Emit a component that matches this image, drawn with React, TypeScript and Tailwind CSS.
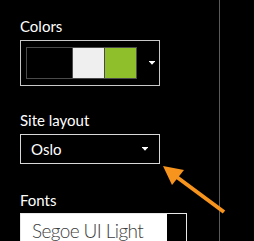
import React from "react";

function Caret() {
  return (
    <svg width="6" height="4" viewBox="0 0 6 4" className="block">
      <rect x="0" y="0" width="6" height="1" fill="#fff" />
      <polygon points="0.5,1 5.5,1 3,3.8" fill="#fff" />
    </svg>
  );
}

export default function App() {
  return (
    <div
      className="relative w-[254px] h-[241px] overflow-hidden bg-black text-white flex"
      style={{ fontFamily: 'Lato, "Noto Sans", sans-serif' }}
    >
      <div className="w-[220px] shrink-0 border-r border-[#5a5a5a] pl-[20px] pt-[16px]">
        <div className="text-[15px] leading-[20px] h-[20px]">Colors</div>
        <div className="mt-[4px] w-[140px] h-[46px] border border-[#c8c8c8] flex items-start pt-[6px] pl-[5px]">
          <div className="flex h-[32px]">
            <div className="w-[47px] h-[32px] border border-[#4a4a4a] bg-black" />
            <div className="w-[32px] h-[32px] border border-[#4a4a4a] border-l-0 bg-[#efefef]" />
            <div className="w-[32px] h-[32px] border border-[#4a4a4a] border-l-0 bg-[#8fbf2a]" />
          </div>
          <div className="ml-[12px] mt-[14px]">
            <Caret />
          </div>
        </div>
        <div className="mt-[24px] text-[15px] leading-[20px] h-[20px]">Site layout</div>
        <div className="mt-[4px] w-[140px] h-[30px] border border-[#d8d8d8] flex items-center pl-[10px] pr-[11px] justify-between">
          <span className="text-[15px] leading-[20px]">Oslo</span>
          <Caret />
        </div>
        <div className="mt-[26px] text-[15px] leading-[20px] h-[20px]">Fonts</div>
        <div className="mt-[3px] w-[167px] h-[40px] border border-[#e8e8e8] flex">
          <div className="w-[146px] bg-white text-[#3c3c3c] pl-[11px] pt-[5px] text-[19px] leading-[24px] tracking-[-0.6px] font-light whitespace-nowrap">
            Segoe UI Light
          </div>
        </div>
      </div>
      <div className="flex-1" />
      <svg
        className="absolute left-0 top-0 pointer-events-none"
        width="254"
        height="241"
        viewBox="0 0 254 241"
      >
        <line x1="224" y1="212" x2="170" y2="172" stroke="#f7941d" strokeWidth="4" />
        <polygon points="163,166 184,170 172,185" fill="#f7941d" />
      </svg>
    </div>
  );
}
